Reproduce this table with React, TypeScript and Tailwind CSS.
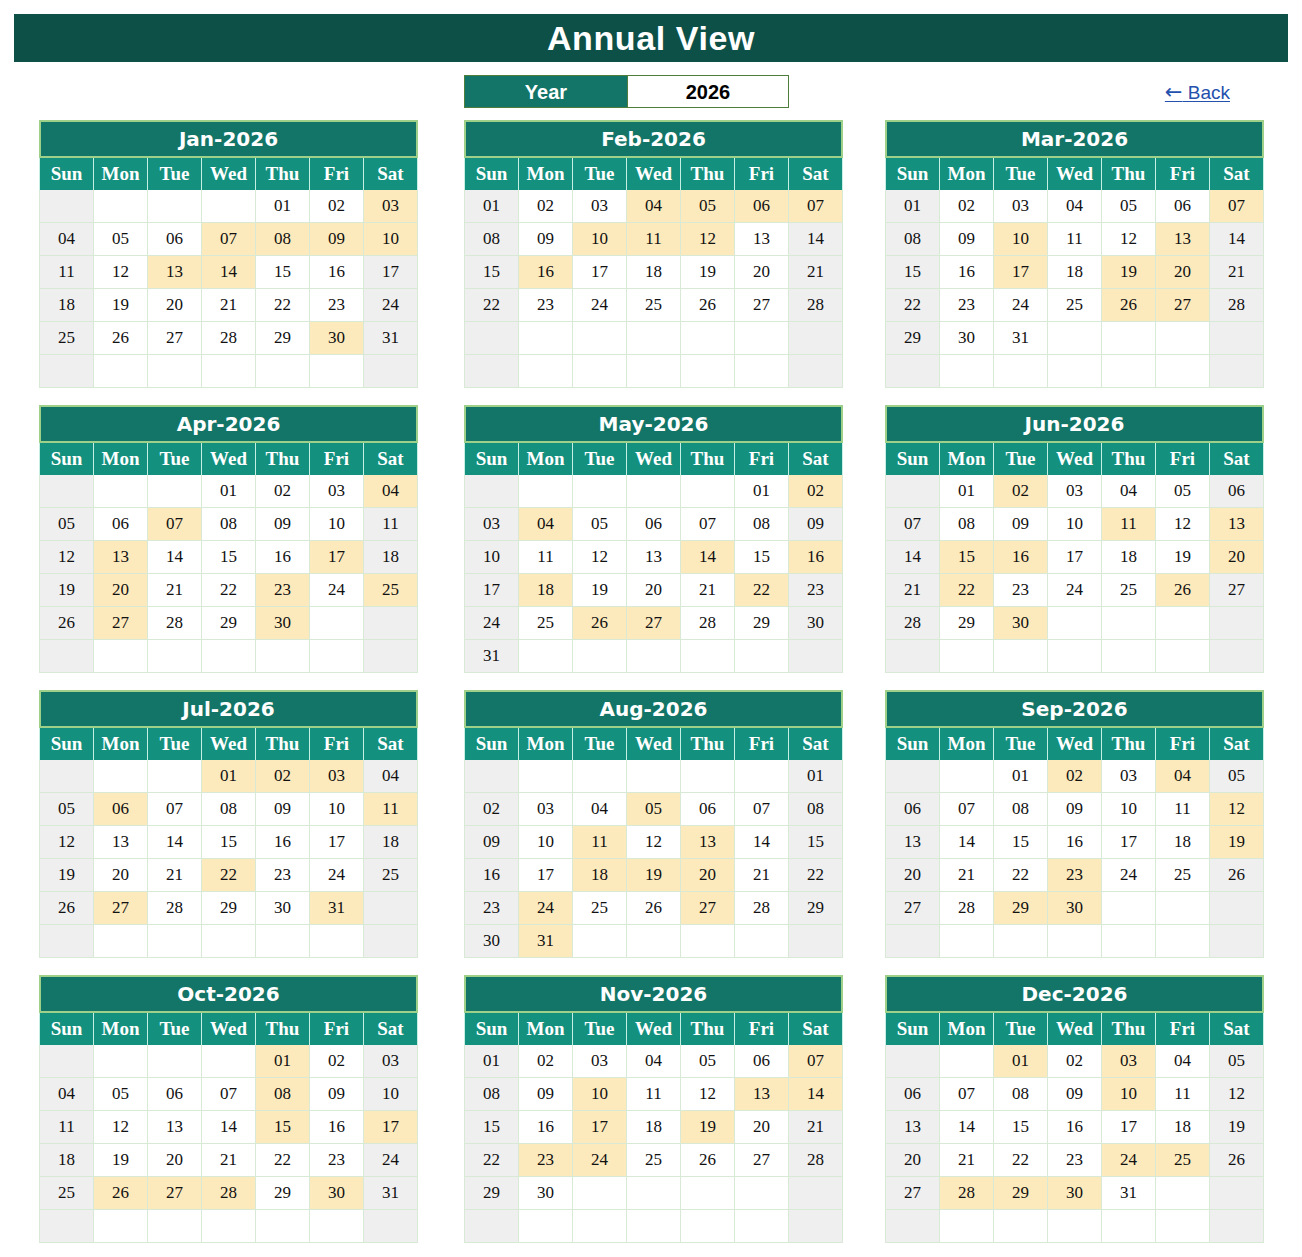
const YEAR = 2026

const monthNames = ['Jan', 'Feb', 'Mar', 'Apr', 'May', 'Jun', 'Jul', 'Aug', 'Sep', 'Oct', 'Nov', 'Dec']
const dayNames = ['Sun', 'Mon', 'Tue', 'Wed', 'Thu', 'Fri', 'Sat']

// highlighted dates per month
const marked: number[][] = [
  [3, 7, 8, 9, 10, 13, 14, 30],
  [4, 5, 6, 7, 10, 11, 12, 16],
  [7, 10, 13, 17, 19, 20, 26, 27],
  [4, 7, 13, 17, 20, 23, 25, 27, 30],
  [2, 4, 14, 16, 18, 22, 26, 27],
  [2, 11, 13, 15, 16, 20, 22, 26, 30],
  [1, 2, 3, 6, 11, 22, 27, 31],
  [5, 11, 13, 18, 19, 20, 24, 27, 31],
  [2, 4, 12, 19, 23, 29, 30],
  [1, 8, 15, 17, 26, 27, 28, 30],
  [7, 10, 13, 14, 17, 19, 23, 24],
  [1, 3, 10, 24, 25, 28, 29, 30],
]

function MonthCard({ month }: { month: number }) {
  const first = new Date(YEAR, month, 1).getDay()
  const days = new Date(YEAR, month + 1, 0).getDate()
  const cells: (number | null)[] = []
  for (let i = 0; i < 42; i++) {
    const d = i - first + 1
    cells.push(d >= 1 && d <= days ? d : null)
  }

  return (
    <div className="w-[379px]">
      <div className="h-[38px] bg-[#137567] border-2 border-[#9fd08a] flex items-center justify-center text-white text-[20px] font-bold font-['Comic_Sans_MS','DejaVu_Sans',sans-serif]">
        {monthNames[month]}-{YEAR}
      </div>
      <div className="grid grid-cols-7 h-[32px] bg-[#14907e] border-l border-[#c6efe4]">
        {dayNames.map((name) => (
          <div
            key={name}
            className="flex items-center justify-center border-r border-[#c6efe4] text-white text-[19px] font-bold font-['Liberation_Serif',serif]"
          >
            {name}
          </div>
        ))}
      </div>
      <div className="grid grid-cols-7 border-l border-[#d8e9d6]">
        {cells.map((d, i) => {
          const col = i % 7
          const weekend = col === 0 || col === 6
          const hi = d !== null && marked[month].includes(d)
          const bg = hi ? 'bg-[#fdeabc]' : weekend ? 'bg-[#efefef]' : 'bg-white'
          return (
            <div
              key={i}
              className={`h-[33px] flex items-center justify-center border-r border-b border-[#d8e9d6] text-[17px] text-[#111] font-['Liberation_Serif',serif] ${bg}`}
            >
              {d !== null ? String(d).padStart(2, '0') : ''}
            </div>
          )
        })}
      </div>
    </div>
  )
}

export default function App() {
  return (
    <div className="w-[1302px] min-h-[1257px] bg-white pt-[14px] font-['Liberation_Sans',Arial,sans-serif]">
      <div className="mx-[14px] h-[48px] bg-[#0d5048] flex items-center justify-center">
        <h1 className="text-white text-[34px] font-bold tracking-[0.6px]">Annual View</h1>
      </div>

      <div className="mt-[13px] h-[33px] flex items-center">
        <div className="ml-[464px] flex h-[33px] border border-[#4f7d3c]">
          <div className="w-[162px] bg-[#137567] flex items-center justify-center text-white text-[20px] font-bold">
            Year
          </div>
          <div className="w-[161px] bg-white border-l border-[#4f7d3c] flex items-center justify-center text-black text-[20px] font-bold">
            {YEAR}
          </div>
        </div>
        <a
          href="#"
          className="ml-auto mr-[72px] mt-[3px] text-[19px] text-[#2451ad] underline underline-offset-2 decoration-1"
        >
          <span className="font-['DejaVu_Sans',sans-serif] text-[21px] leading-none">←</span> Back
        </a>
      </div>

      <div className="mt-[12px] pl-[39px] grid grid-cols-[425px_421px_379px] gap-y-[17px]">
        {monthNames.map((_, m) => (
          <MonthCard key={m} month={m} />
        ))}
      </div>
    </div>
  )
}
